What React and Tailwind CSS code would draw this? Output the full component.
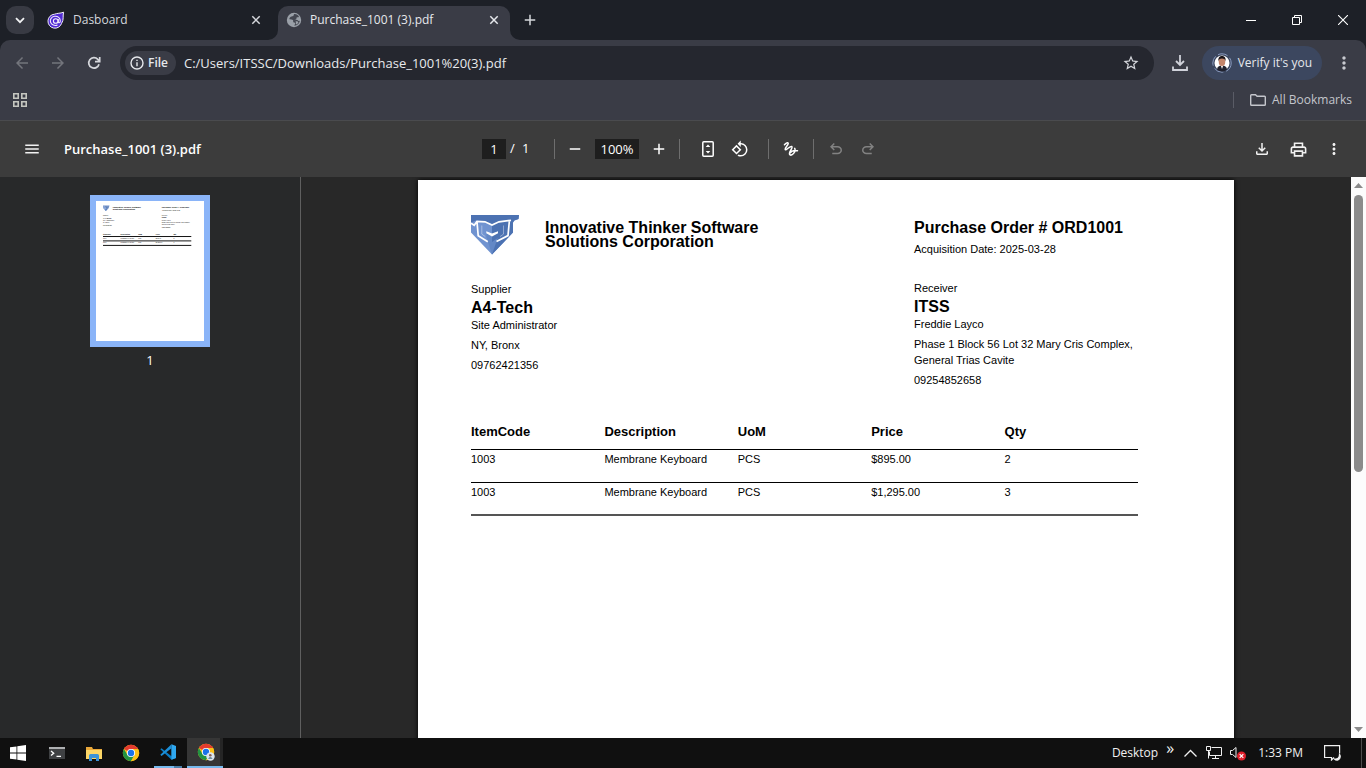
const UI = "font-['Open_Sans','Segoe_UI',sans-serif]";

function Icon({ size = 20, d, viewBox = "0 0 24 24", className = "", children }) {
  return (
    <svg width={size} height={size} viewBox={viewBox} fill="currentColor" className={`shrink-0 ${className}`} aria-hidden="true">
      {d ? <path d={d} /> : children}
    </svg>
  );
}

const P = {
  back: "M20 11H7.83l5.59-5.59L12 4l-8 8 8 8 1.41-1.41L7.83 13H20v-2z",
  forward: "M12 4l-1.41 1.41L16.17 11H4v2h12.17l-5.58 5.59L12 20l8-8z",
  menu: "M3 18h18v-2H3v2zm0-5h18v-2H3v2zm0-7v2h18V6H3z",
  more: "M12 8c1.1 0 2-.9 2-2s-.9-2-2-2-2 .9-2 2 .9 2 2 2zm0 2c-1.1 0-2 .9-2 2s.9 2 2 2 2-.9 2-2-.9-2-2-2zm0 6c-1.1 0-2 .9-2 2s.9 2 2 2 2-.9 2-2-.9-2-2-2z",
  add: "M19 13h-6v6h-2v-6H5v-2h6V5h2v6h6v2z",
  remove: "M19 13H5v-2h14v2z",
  download: "M18 15v3H6v-3H4v3c0 1.1.9 2 2 2h12c1.1 0 2-.9 2-2v-3h-2zm-1-4-1.41-1.41L13 12.17V4h-2v8.17L8.41 9.59 7 11l5 5 5-5z",
  print: "M19 8h-1V3H6v5H5c-1.66 0-3 1.34-3 3v6h4v4h12v-4h4v-6c0-1.66-1.34-3-3-3zM8 5h8v3H8V5zm8 12v2H8v-4h8v2zm2-2v-2H6v2H4v-4c0-.55.45-1 1-1h14c.55 0 1 .45 1 1v4h-2z",
  rotate: "M7.34 6.41L.86 12.9l6.49 6.48 6.49-6.48-6.5-6.49zM3.69 12.9l3.66-3.66L11 12.9l-3.66 3.66-3.65-3.66zm15.67-6.26A8.95 8.95 0 0013 4V.76L8.76 5 13 9.24V6c1.79 0 3.58.68 4.95 2.05a7.007 7.007 0 010 9.9 6.973 6.973 0 01-7.79 1.44l-1.49 1.49C10.02 21.62 11.51 22 13 22c2.3 0 4.61-.88 6.36-2.64a8.98 8.98 0 000-12.72z",
  star: "M22 9.24l-7.19-.62L12 2 9.19 8.63 2 9.24l5.46 4.73L5.82 21 12 17.27 18.18 21l-1.63-7.03L22 9.24zM12 15.4l-3.76 2.27 1-4.28-3.32-2.88 4.38-.38L12 6.1l1.71 4.04 4.38.38-3.32 2.88 1 4.28L12 15.4z",
  undo: "M280-200v-80h284q63 0 109.5-40T720-420q0-60-46.5-100T564-560H312l104 104-56 56-200-200 200-200 56 56-104 104h252q97 0 166.5 63T800-420q0 94-69.500 157T564-200H280Z",
};

function IconButton({ label, className = "", children }) {
  return (
    <button type="button" aria-label={label} className={`flex shrink-0 items-center justify-center ${className}`}>
      {children}
    </button>
  );
}

function CloseGlyph() {
  return (
    <svg width="10" height="10" viewBox="0 0 10 10" stroke="currentColor" strokeWidth="1.5" aria-hidden="true">
      <path d="M1.300 1.300l7.400 7.400M8.700 1.300L1.300 8.700" />
    </svg>
  );
}

function SpiralFavicon() {
  return (
    <svg width="18" height="18" viewBox="0 0 18 18" className="shrink-0" aria-hidden="true">
      <path d="M16.600 1.200C13 2.600 10.500 2 7.500 3.200A7 7 0 1 0 14.600 12.400C17.200 8.500 15.500 5 16.600 1.200Z" fill="#512bd4" stroke="#f2eefc" strokeWidth="1" />
      <path d="M11.300 8V10.800c0 1.600 2 1.200 2-.8A5 4.600 0 1 0 10.500 14" fill="none" stroke="#f2eefc" strokeWidth="1.100" />
      <circle cx="8.700" cy="10" r="2.300" fill="none" stroke="#f2eefc" strokeWidth="1.100" />
    </svg>
  );
}

function GlobeFavicon() {
  return (
    <svg width="16" height="16" viewBox="0 0 16 16" className="shrink-0" aria-hidden="true">
      <circle cx="8" cy="8" r="7.200" fill="#9aa0a8" />
      <path d="M8 2.200C10 1.800 12 3 13 4.700c-.8.800-1.500.200-2.300.7-.6.500.1 1.300-.5 2-.6.500-1.500.1-2.200.7 1.500.3 2.900-.4 3.900.3.900.600 1.300.600 1.900.4C13.400 11.500 11 13.700 8.500 13.800c-.3-1 .9-1.500.7-2.600-.2-.8-1.400-.5-1.900-1.300-.4-.700.200-1.300-.3-1.800C6 7.500 4.500 7.200 3.500 7.300c-.4-1 .600-2 1.300-2.500.900-.700 2.500-.300 2.800-1.300z" fill="#3a3c46" opacity=".9" />
      <path d="M9.500 9.500c1.300-.500 2.600.1 2.900 1-.500 1-1.600 1.900-2.400 2.100-.4-1 .300-2-.5-3.100z" fill="#9aa0a8" />
    </svg>
  );
}

function TabStrip() {
  return (
    <div className="flex h-10 shrink-0 items-start bg-[#1d2027] pl-1.5 text-[#d5d7dc]">
      <IconButton label="Search tabs" className="mt-1.5 size-7 rounded-[10px] bg-[#383a43]">
        <svg width="10" height="7" viewBox="0 0 10 7" fill="none" stroke="#f1f2f4" strokeWidth="1.800" aria-hidden="true">
          <path d="M1 1.200l4 4 4-4" />
        </svg>
      </IconButton>
      <div role="tablist" className="flex min-w-0 pt-1.5">
        <div className="flex h-[28px] w-[244px] min-w-0 items-center pl-3">
          <div role="tab" aria-selected="false" className="flex grow items-center gap-2 pl-px text-xs">
            <SpiralFavicon />
            <span>Dasboard</span>
          </div>
          <IconButton label="Close Dasboard" className="mr-3 size-5">
            <CloseGlyph />
          </IconButton>
        </div>
        <div className="relative flex h-[34px] w-[232px] items-center rounded-t-[10px] bg-[#3a3c46] pb-1.5 text-[#e6e8ec]">
          <svg width="10" height="10" className="absolute -left-2.5 bottom-0" aria-hidden="true">
            <path d="M10 0v10H0A10 10 0 0 0 10 0Z" fill="#3a3c46" />
          </svg>
          <svg width="10" height="10" className="absolute -right-2.5 bottom-0" aria-hidden="true">
            <path d="M0 0v10h10A10 10 0 0 1 0 0Z" fill="#3a3c46" />
          </svg>
          <div role="tab" aria-selected="true" className="flex grow items-center gap-2 pl-2 text-xs">
            <GlobeFavicon />
            <span>Purchase_1001 (3).pdf</span>
          </div>
          <IconButton label="Close Purchase_1001 (3).pdf" className="mr-1.5 size-5">
            <CloseGlyph />
          </IconButton>
        </div>
      </div>
      <IconButton label="New tab" className="mt-1.5 ml-1.5 size-7">
        <Icon size={18} d={P.add} />
      </IconButton>
      <div className="ml-auto flex text-white">
        <IconButton label="Minimize" className="h-10 w-[46px]">
          <svg width="10" height="10" stroke="currentColor" aria-hidden="true"><path d="M0 5.500h10" /></svg>
        </IconButton>
        <IconButton label="Restore" className="h-10 w-[46px]">
          <svg width="10" height="10" fill="none" stroke="currentColor" aria-hidden="true">
            <path d="M.5 2.500h7v7h-7zM2.500 2.500v-2h7v7h-2" />
          </svg>
        </IconButton>
        <IconButton label="Close window" className="h-10 w-[46px]">
          <svg width="10" height="10" stroke="currentColor" strokeWidth="1.100" aria-hidden="true"><path d="M0 0l10 10M10 0L0 10" /></svg>
        </IconButton>
      </div>
    </div>
  );
}

function Avatar() {
  return (
    <svg width="20" height="20" viewBox="0 0 20 20" className="shrink-0" aria-hidden="true">
      <circle cx="10" cy="10" r="9.200" fill="none" stroke="#8b9cc0" strokeWidth="1" strokeDasharray="10 3" />
      <circle cx="10" cy="10" r="7.500" fill="#fff" />
      <path d="M5 16.500c.4-3 2-4 5-4s4.600 1 5 4a7.500 7.500 0 0 1-10 0Z" fill="#20222e" />
      <path d="M8.600 12l1.400 4 1.400-4Z" fill="#fff" />
      <ellipse cx="10" cy="8.800" rx="3.300" ry="4.200" fill="#c4866b" />
      <path d="M6.400 8.300C6 4 8 3.100 10 3.100s4 .9 3.600 5.200C13 6.300 12 5.600 10 5.600s-3 .700-3.600 2.700Z" fill="#1b1518" />
    </svg>
  );
}

function BrowserBar() {
  return (
    <div className="shrink-0 bg-[#1d2027]">
      <div className="rounded-t-[10px] border-b border-[#4a4b4e] bg-[#3a3c46]">
        <div className="flex items-center pt-1.5 pr-2">
          <div className="flex w-[120px] shrink-0 items-center gap-2 pl-2">
            <IconButton label="Back" className="size-7 text-[#73757c]"><Icon size={18} d={P.back} /></IconButton>
            <IconButton label="Forward" className="size-7 text-[#73757c]"><Icon size={18} d={P.forward} /></IconButton>
            <IconButton label="Reload" className="size-7 text-[#d5d7dc]">
              <svg width="14" height="14" viewBox="0 0 14 14" fill="none" stroke="currentColor" strokeWidth="1.700" aria-hidden="true">
                <path d="M12 8.200A5.200 5.200 0 1 1 10.800 3.400L12.500 5.100M12.700 1v4.700H8" />
              </svg>
            </IconButton>
          </div>
          <div className="flex h-[34px] min-w-0 grow items-center rounded-full bg-[#25272f] px-[5px]">
            <button type="button" className="flex h-6 shrink-0 items-center gap-1 rounded-full bg-[#3a3c46] px-[5px] pr-2 text-xs font-semibold text-[#e6e8ec]">
              <svg width="14" height="14" viewBox="0 0 14 14" fill="none" stroke="currentColor" strokeWidth="1.400" aria-hidden="true">
                <circle cx="7" cy="7" r="6" /><path d="M7 6.200v4M7 3.700v1.400" />
              </svg>
              File
            </button>
            <input aria-label="Address" defaultValue="C:/Users/ITSSC/Downloads/Purchase_1001%20(3).pdf" className="ml-2 min-w-0 grow bg-transparent pt-px text-[13px] text-[#e8eaed] outline-none" />
            <IconButton label="Bookmark this tab" className="mr-1 size-7 text-[#d5d7dc]"><Icon size={18} d={P.star} /></IconButton>
          </div>
          <IconButton label="Downloads" className="ml-3 size-7 text-[#d0d2da]">
            <svg width="16" height="16" viewBox="0 0 16 16" fill="none" stroke="currentColor" strokeWidth="1.800" aria-hidden="true">
              <path d="M8 0v9.500M4 6l4 4 4-4M1 11.500V15h14v-3.500" />
            </svg>
          </IconButton>
          <button type="button" className="ml-2 flex h-[34px] shrink-0 items-center gap-1.5 rounded-full bg-[#3c475f] pr-2.5 pl-2.5 text-xs text-[#e6e8ec]">
            <Avatar />
            Verify it's you
          </button>
          <IconButton label="Chrome menu" className="ml-2 size-7 text-[#c8cad0]"><Icon size={20} d={P.more} /></IconButton>
        </div>
        <div className="flex h-10 items-center pr-3.5 pl-[13px] text-[#c4c6cc]">
          <IconButton label="Apps" className="size-3.5 text-[#c4c6bf]">
            <svg width="14" height="14" fill="none" stroke="currentColor" strokeWidth="1.600" aria-hidden="true">
              <path d="M.8.800h4.400v4.400H.8zM8.800.8h4.400v4.400H8.800zM.8 8.800h4.400v4.400H.8zM8.800 8.800h4.400v4.400H8.800z" />
            </svg>
          </IconButton>
          <div className="mr-4 ml-auto h-4 w-px bg-[#5a5c66]" />
          <button type="button" className="flex items-center gap-1.5 text-xs">
            <svg width="16" height="12" viewBox="0 0 16 12" fill="none" stroke="currentColor" strokeWidth="1.400" aria-hidden="true">
              <path d="M.7 1.500q0-.8.8-.8h4l1.600 1.600h7.400q.8 0 .8.800v7.400q0 .8-.8.800h-13q-.8 0-.8-.8z" />
            </svg>
            All Bookmarks
          </button>
        </div>
      </div>
    </div>
  );
}

function Divider() {
  return <div className="h-5 w-px bg-[#6e6e6e]" />;
}

function PdfToolbar() {
  return (
    <div className="grid h-14 shrink-0 grid-cols-[1fr_auto_1fr] items-center bg-[#3c3c3c] px-4 text-[#f1f1f1]">
      <div className="flex items-center gap-4">
        <IconButton label="Menu" className="size-8"><Icon size={18} d={P.menu} /></IconButton>
        <h1 className="pt-0.5 text-[13px] font-semibold text-white">Purchase_1001 (3).pdf</h1>
      </div>
      <div className="flex items-center text-[13px] text-white">
        <input aria-label="Page number" defaultValue="1" className="h-5 w-6 bg-[#1e1e1e] text-center outline-none" />
        <span className="ml-1 w-3">/</span>
        <span className="w-8">1</span>
        <Divider />
        <IconButton label="Zoom out" className="ml-1 size-8"><Icon size={18} d={P.remove} /></IconButton>
        <input aria-label="Zoom level" defaultValue="100%" className="mx-1 h-5 w-11 bg-[#1e1e1e] text-center outline-none" />
        <IconButton label="Zoom in" className="mr-1 size-8"><Icon size={18} d={P.add} /></IconButton>
        <Divider />
        <IconButton label="Fit to page" className="ml-3 size-8">
          <svg width="12" height="16" viewBox="0 0 12 16" aria-hidden="true">
            <rect x=".8" y=".8" width="10.400" height="14.400" rx="1" fill="none" stroke="currentColor" strokeWidth="1.500" />
            <path d="M3.700 6L6 3.500 8.300 6zM3.700 10L6 12.500 8.300 10z" fill="currentColor" />
          </svg>
        </IconButton>
        <IconButton label="Rotate counterclockwise" className="mr-3 size-8"><Icon size={18} d={P.rotate} /></IconButton>
        <Divider />
        <IconButton label="Draw" className="mx-1.5 size-8">
          <svg width="16" height="16" viewBox="0 0 16 16" fill="none" stroke="currentColor" strokeWidth="1.500" strokeLinecap="round" aria-hidden="true">
            <path d="M1.500 3.800C3 2 5 .9 5.200 2.300 5.500 4 1.800 6.600 2.200 8.300c.5 2 4.800-3.800 6.600-2.800 1.800 1.200-4 6.200-2 8.200 2.200 1.700 6.400-3.200 4.900-6.300M14.500 9.700C11.500 9.200 8 10.500 6.700 12.200" />
          </svg>
        </IconButton>
        <Divider />
        <IconButton label="Undo" className="ml-1.5 size-8 text-[#828282]"><Icon size={18} viewBox="0 -960 960 960" d={P.undo} /></IconButton>
        <IconButton label="Redo" className="size-8 text-[#828282]"><Icon size={18} viewBox="0 -960 960 960" d={P.undo} className="-scale-x-100" /></IconButton>
      </div>
      <div className="flex items-center justify-end gap-1">
        <IconButton label="Download" className="size-8"><Icon size={18} d={P.download} /></IconButton>
        <IconButton label="Print" className="size-8"><Icon size={19} d={P.print} /></IconButton>
        <IconButton label="More actions" className="size-8"><Icon size={18} d={P.more} /></IconButton>
      </div>
    </div>
  );
}

function LogoArt() {
  return (
    <g>
      <path d="M0 0h48l-.5 4-4.200 1.500-1.300 2V17.500L21 39.500 0 17.500Z" fill="#7093d0" />
      <path d="M0 0h48l-.5 4-4.200 1.500-1.300 2V17.500L21 39.500V9L5 5.500 0 7.500Z" fill="#4c72b2" />
      <path d="M21 20l6-3.300v5.500L21 39.500l-5.500-17.300V16.700Z" fill="#6388c6" />
      <path d="M21 20.300l6-3.600v6L21 27Z" fill="#4c72b2" />
      <path d="M0 8.300l3.200 2L6 6.300l8 .5 7 3.200 7-3.200 12-1.500M6 6.800l1.200 14 9.600 5.900M38.300 6.500L37 20.600l-11.500 6" fill="none" stroke="#fff" strokeWidth="1.700" />
      <path d="M10.800 10.500v8.600l3.500 2.500M32.500 10.500v8.600l-3.500 2.500" fill="none" stroke="#fff" strokeWidth=".7" opacity=".55" />
      <path d="M15.300 16.300l5.700 2.200 6-2.200v1.900L21 21.400l-5.700-3.200z" fill="#fff" />
    </g>
  );
}

const rows = [
  { code: "1003", description: "Membrane Keyboard", uom: "PCS", price: "$895.00", qty: "2" },
  { code: "1003", description: "Membrane Keyboard", uom: "PCS", price: "$1,295.00", qty: "3" },
];
const columns = ["ItemCode", "Description", "UoM", "Price", "Qty"];

function Thumbnail() {
  return (
    <svg viewBox="0 0 816 1056" className="block h-[140px] w-[108px]" preserveAspectRatio="none" fontFamily="Liberation Sans, Arial, sans-serif" fontSize="11" fill="#000" aria-hidden="true">
      <rect width="816" height="1056" fill="#fff" />
      <g transform="translate(53 35)"><LogoArt /></g>
      <g fontSize="16" fontWeight="700">
        <text x="127" y="53">Innovative Thinker Software</text>
        <text x="127" y="69">Solutions Corporation</text>
        <text x="496" y="53">Purchase Order # ORD1001</text>
        <text x="53" y="133">A4-Tech</text>
        <text x="496" y="132">ITSS</text>
      </g>
      <text x="496" y="73">Acquisition Date: 2025-03-28</text>
      <text x="53" y="113">Supplier</text>
      <text x="53" y="149">Site Administrator</text>
      <text x="53" y="169">NY, Bronx</text>
      <text x="53" y="189">09762421356</text>
      <text x="496" y="112">Receiver</text>
      <text x="496" y="148">Freddie Layco</text>
      <text x="496" y="168">Phase 1 Block 56 Lot 32 Mary Cris Complex,</text>
      <text x="496" y="184">General Trias Cavite</text>
      <text x="496" y="204">09254852658</text>
      {columns.map((c, i) => <text key={c} x={53 + i * 133} y="256" fontSize="13" fontWeight="700">{c}</text>)}
      {rows.map((r, j) =>
        Object.values(r).map((v, i) => <text key={`${j}-${i}`} x={53 + i * 133} y={283 + j * 33}>{v}</text>)
      )}
      <path d="M53 268h667M53 301h667M53 335h667" stroke="#000" strokeWidth="7" />
    </svg>
  );
}

function DocumentPage() {
  return (
    <article className="h-[1056px] w-[816px] shrink-0 bg-white px-[53px] pt-[34px] font-['Liberation_Sans',Arial,sans-serif] text-[11px] leading-4 text-black shadow-[0_0_5px_#000]">
      <div className="grid grid-cols-[443px_1fr]">
        <div className="flex gap-6 pt-px">
          <svg width="50" height="40" viewBox="0 0 50 40" role="img" aria-label="Company logo"><LogoArt /></svg>
          <h2 className="pt-1.5 text-base leading-3.5 font-bold">Innovative Thinker Software<br />Solutions Corporation</h2>
        </div>
        <div>
          <h2 className="pt-1 text-base leading-5 font-bold">Purchase Order # ORD1001</h2>
          <p className="pt-[3px]">Acquisition Date: 2025-03-28</p>
        </div>
      </div>
      <div className="grid grid-cols-[443px_1fr] pt-[23px]">
        <section className="pt-px">
          <p>Supplier</p>
          <h3 className="pt-0.5 text-base leading-[18px] font-bold">A4-Tech</h3>
          <p>Site Administrator</p>
          <p className="pt-1">NY, Bronx</p>
          <p className="pt-1">09762421356</p>
        </section>
        <section>
          <p>Receiver</p>
          <h3 className="pt-0.5 text-base leading-[18px] font-bold">ITSS</h3>
          <p>Freddie Layco</p>
          <p className="pt-1">Phase 1 Block 56 Lot 32 Mary Cris Complex,<br />General Trias Cavite</p>
          <p className="pt-1">09254852658</p>
        </section>
      </div>
      <table className="mt-7 w-[667px] table-fixed border-collapse text-left">
        <thead>
          <tr className="h-[33px] border-b border-black align-top text-[13px]">
            {columns.map((c) => <th key={c} className="pt-2 font-bold">{c}</th>)}
          </tr>
        </thead>
        <tbody>
          {rows.map((r, i) => (
            <tr key={i} className="h-[33px] border-b border-black align-top last:border-b-2 last:border-[#555]">
              <td className="pt-px">{r.code}</td>
              <td className="pt-px">{r.description}</td>
              <td className="pt-px">{r.uom}</td>
              <td className="pt-px">{r.price}</td>
              <td className="pt-px">{r.qty}</td>
            </tr>
          ))}
        </tbody>
      </table>
    </article>
  );
}

function Viewer() {
  return (
    <div className="flex min-h-0 grow bg-[#282828]">
      <aside className="flex w-[301px] shrink-0 flex-col items-center border-r border-[#5f5f5f] bg-[#28292a] pt-[18px]">
        <button type="button" aria-label="Go to page 1" className="bg-[#8ab4f8] p-1.5"><Thumbnail /></button>
        <span className="pt-[3px] text-[13px] leading-5 text-white">1</span>
      </aside>
      <main className="flex min-w-0 grow justify-center overflow-hidden pt-[3px]">
        <DocumentPage />
      </main>
      <div className="flex w-[15px] shrink-0 flex-col items-center justify-between bg-[#fcfcfc] py-1.5 text-[#8b8b8b]">
        <svg width="9" height="5" className="shrink-0" aria-hidden="true"><path d="M4.500 0L9 5H0z" fill="currentColor" /></svg>
        <div className="flex min-h-0 w-[9px] grow flex-col pt-[7px]">
          <div className="h-[52%] rounded-full bg-[#8b8b8b]" />
        </div>
        <svg width="9" height="5" className="shrink-0" aria-hidden="true"><path d="M0 0h9L4.500 5z" fill="currentColor" /></svg>
      </div>
    </div>
  );
}

function ChromeIcon({ badge }) {
  return (
    <svg width="18" height="18" viewBox="0 0 18 18" aria-hidden="true">
      <circle cx="9" cy="9" r="8.200" fill="#fbc116" />
      <path d="M9 9L1.900 4.900A8.200 8.200 0 0 1 16.100 4.900Z" fill="#e33b2e" />
      <path d="M1.900 4.900A8.200 8.200 0 0 0 9 17.200L12.600 11 9 9 5.500 11Z" fill="#229342" />
      <path d="M9 4.900h7.100A8.200 8.200 0 0 1 9 17.200L12.600 11Z" fill="#fbc116" />
      <circle cx="9" cy="9" r="4.100" fill="#fff" />
      <circle cx="9" cy="9" r="3.200" fill="#1a73e8" />
      {badge && (
        <g>
          <circle cx="13.500" cy="13.500" r="4.200" fill="#dbe6ee" />
          <circle cx="13.300" cy="12.200" r="1.300" fill="#8b5f50" />
          <path d="M11.200 15.800c.5-2.200 3.800-2.200 4.300 0Z" fill="#4d7085" />
        </g>
      )}
    </svg>
  );
}

function Taskbar() {
  return (
    <footer className="flex h-[30px] shrink-0 items-stretch justify-between bg-[#101010] text-xs text-[#f0f0f0]">
      <div className="flex">
        <IconButton label="Start" className="w-9">
          <svg width="16" height="16" viewBox="0 0 16 16" fill="#fff" aria-hidden="true">
            <path d="M0 2.300l6.500-.9v6.100H0zM7.300 1.300L16 0v7.500H7.300zM0 8.400h6.500v6.200L0 13.700zM7.300 8.400H16V16l-8.700-1.300z" />
          </svg>
        </IconButton>
        <IconButton label="Terminal" className="ml-1 w-[34px]">
          <svg width="16" height="12" viewBox="0 0 16 12" aria-hidden="true">
            <rect width="16" height="12" fill="#3f4143" /><rect width="16" height="2" fill="#aeb0b2" />
            <path d="M2 4l2.700 2.200L2 8.500M7.500 9.300h4.500" fill="none" stroke="#fff" strokeWidth="1.300" />
          </svg>
        </IconButton>
        <IconButton label="File Explorer" className="ml-[3px] w-[34px]">
          <svg width="16" height="15" viewBox="0 0 16 15" aria-hidden="true">
            <path d="M0 1h6l1 2h9v10H0z" fill="#e9a83a" /><path d="M0 4h16v9H0z" fill="#fcd667" />
            <path d="M3 15V9.500Q3 8 4.500 8h7Q13 8 13 9.500V15h-3v-3H6v3z" fill="#3c93d8" />
          </svg>
        </IconButton>
        <IconButton label="Chrome" className="ml-[3px] w-[34px]"><ChromeIcon /></IconButton>
        <button type="button" aria-label="Visual Studio Code, 2 windows" className="ml-1.5 flex w-7 shrink-0 flex-col">
          <span className="flex grow items-center justify-center">
            <svg width="16" height="16" viewBox="0 0 16 16" aria-hidden="true">
              <path d="M11.500 3.800v8.400L1.500 4.300.3 5.300l11.200 10.400L16 14V2z" fill="#0a7cc4" />
              <path d="M.3 10.700L11.500.3v4L1.500 12z" fill="#1c8fd8" />
              <path d="M11.500.3L16 2v12l-4.500 1.700z" fill="#2fa8f0" />
            </svg>
          </span>
          <span className="flex h-0.5 w-full"><span className="grow bg-[#76b9ed]" /><span className="w-2 bg-[#4b7ea8]" /></span>
        </button>
        <button type="button" aria-label="Chrome, 2 windows" className="ml-[5px] flex w-9 shrink-0 flex-col">
          <span className="flex w-full grow">
            <span className="flex grow items-center justify-center bg-[#363636] pl-1"><ChromeIcon badge /></span>
            <span className="w-[3px] bg-[#252525]" />
          </span>
          <span className="h-0.5 w-full bg-[#76b9ed]" />
        </button>
      </div>
      <div className="flex">
        <div className="flex items-center pr-5">
          <span>Desktop</span>
          <span className="pb-2.5 pl-2 text-base leading-none">»</span>
          <IconButton label="Show hidden icons" className="ml-2 w-4">
            <svg width="13" height="8" fill="none" stroke="currentColor" strokeWidth="1.300" aria-hidden="true"><path d="M.5 7.500l6-6 6 6" /></svg>
          </IconButton>
          <IconButton label="Network" className="ml-2 w-4">
            <svg width="16" height="14" fill="none" stroke="currentColor" aria-hidden="true">
              <path d="M5.500 1.500h10v8h-12v-4M.5.500h4v4h-4zM2.500 4.500v8M6 12.500h7M9.500 9.500v3" />
            </svg>
          </IconButton>
          <IconButton label="Volume muted" className="ml-2 w-4">
            <svg width="16" height="15" aria-hidden="true">
              <path d="M.5 4.500h2l3.500-3v10l-3.500-3h-2z" fill="none" stroke="#f0f0f0" />
              <circle cx="11.500" cy="10" r="4.500" fill="#e0202c" />
              <path d="M9.700 8.200l3.600 3.600M13.300 8.200l-3.600 3.600" stroke="#fff" strokeWidth="1.200" />
            </svg>
          </IconButton>
          <span className="ml-3">1:33 PM</span>
          <IconButton label="Notifications" className="ml-5 w-[18px]">
            <svg width="17" height="16" fill="none" stroke="currentColor" strokeWidth="1.200" aria-hidden="true">
              <path d="M10 12.500L7.500 15v-2.500H.6V.6h15v8" />
              <path d="M15.500 9.500c0 3.500-2 5-5 4.500 2 2 5.500 1 5.700-2 .1-1-.2-2-.7-2.500Z" fill="currentColor" />
            </svg>
          </IconButton>
        </div>
        <button type="button" aria-label="Show desktop" className="w-[5px] border-l border-[#4c4c4c]" />
      </div>
    </footer>
  );
}

export default function App() {
  return (
    <div className={`flex h-screen flex-col overflow-hidden ${UI}`}>
      <TabStrip />
      <BrowserBar />
      <PdfToolbar />
      <Viewer />
      <Taskbar />
    </div>
  );
}
